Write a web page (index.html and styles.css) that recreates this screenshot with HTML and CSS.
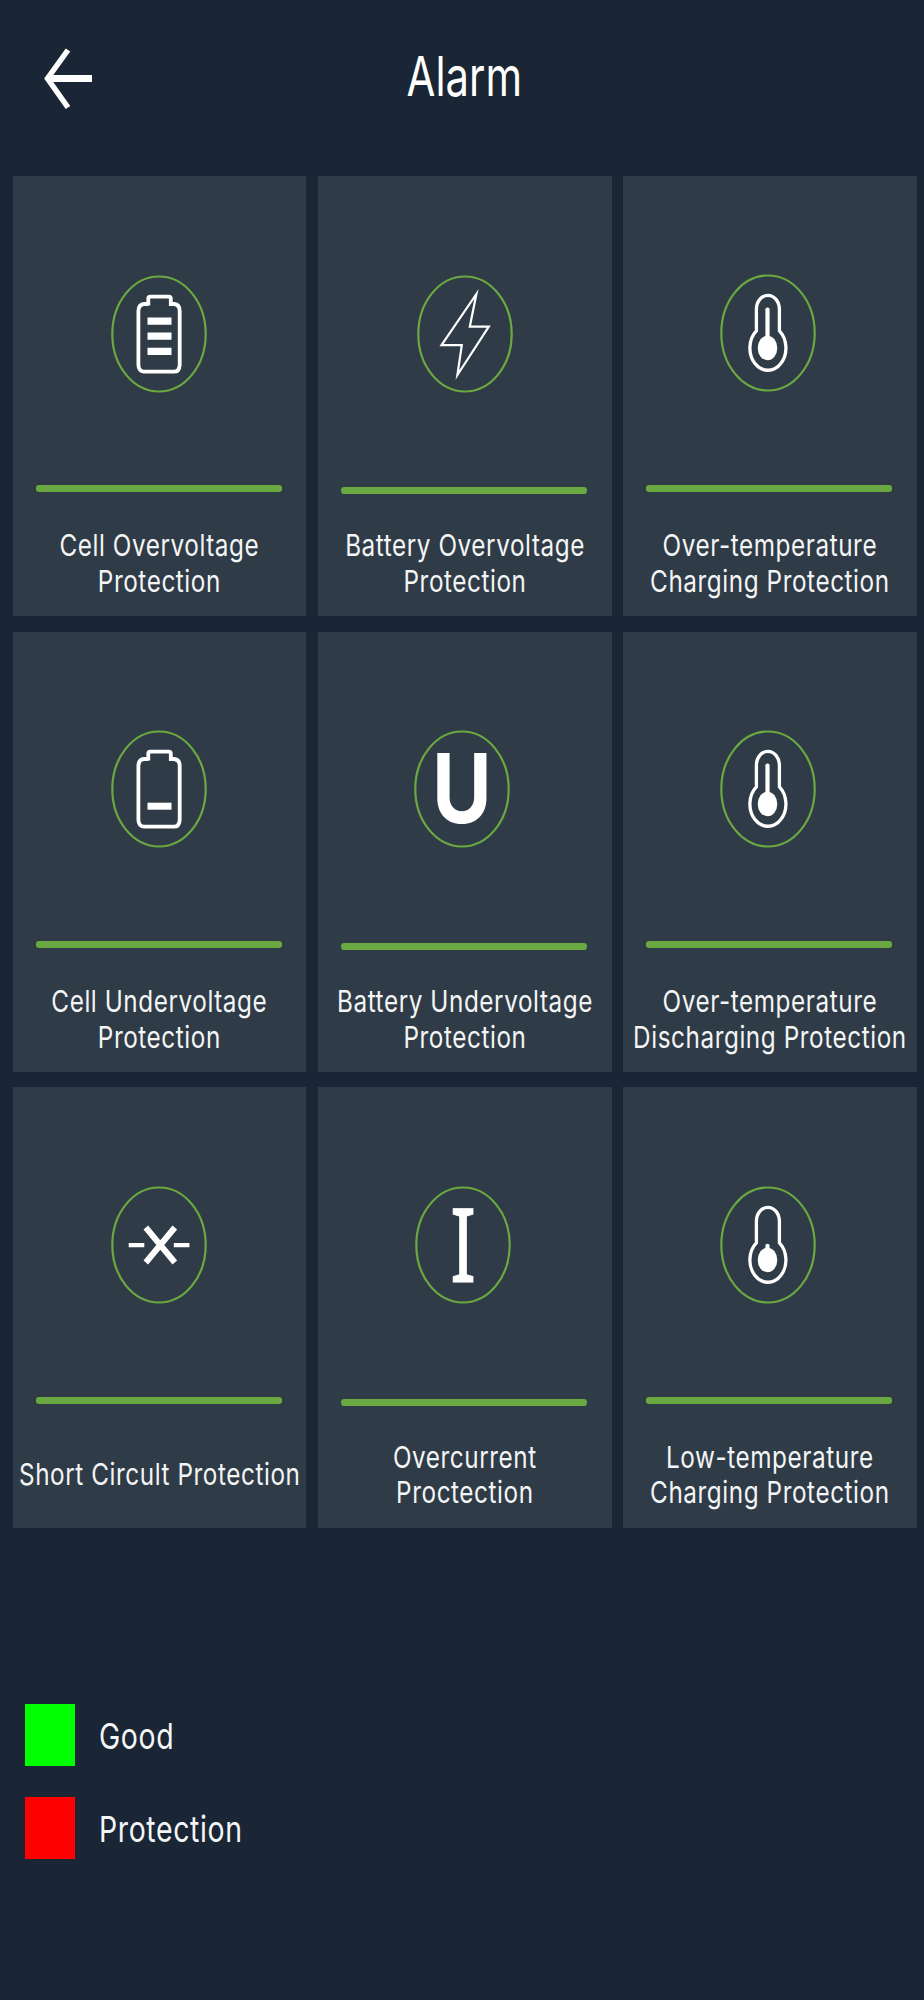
FILE: index.html
```html
<!DOCTYPE html>
<html lang="en">
<head>
    <meta charset="UTF-8">
    <meta name="viewport" content="width=device-width, initial-scale=1.0">
    <title>Alarm</title>
    <link rel="stylesheet" href="styles.css">
</head>
<body>
    <header class="topbar">
        <svg class="back" width="50" height="62" viewBox="0 0 50 62">
            <path class="head" d="M25 2L4.5 30.5L25 59.5"/>
            <path class="shaft" d="M4 30.5H49"/>
        </svg>
        <h1>Alarm</h1>
    </header>

    <main class="grid">
        <div class="card">
            <svg class="icon" viewBox="0 0 96 118">
                <ellipse class="ring" cx="48" cy="59" rx="46.7" ry="57.5"/>
                <path class="line" d="M37.3 30.6V23.5Q37.3 21.6 39.3 21.6H57.8Q59.8 21.6 59.8 23.5V29H63.2Q68.7 29.5 68.7 36V90Q68.2 96.7 63 96.7H33Q27.6 96.2 27.4 90V36Q27.6 29.3 33 29H37.3"/>
                <path class="fill" d="M36.5 42.5h24v7.2h-24zM36.5 57.5h24v7.2h-24zM36.5 72.7h24v7.2h-24z"/>
            </svg>
            <div class="bar"></div>
            <div class="label"><p>Cell Overvoltage<br>Protection</p></div>
        </div>
        <div class="card middle">
            <svg class="icon" viewBox="0 0 96 118">
                <ellipse class="ring" cx="48" cy="59" rx="46.7" ry="57.5"/>
                <path class="bolt" d="M59.4 19L24.5 70.2H44.8L40.4 100L71.8 51.7H52.8Z"/>
            </svg>
            <div class="bar"></div>
            <div class="label"><p>Battery Overvoltage<br>Protection</p></div>
        </div>
        <div class="card right first">
            <svg class="icon" viewBox="0 0 96 118">
                <ellipse class="ring" cx="48" cy="59" rx="46.7" ry="57.5"/>
                <path class="thermo" d="M36.4 56.8V35.3A11.5 14 0 0 1 59.4 35.3V56.8A18 22.3 0 1 1 36.4 56.8Z"/>
                <path class="stem" d="M47.5 35.5V68"/>
                <ellipse class="fill" cx="47.5" cy="74" rx="9.8" ry="12.2"/>
            </svg>
            <div class="bar"></div>
            <div class="label"><p>Over-temperature<br>Charging Protection</p></div>
        </div>

        <div class="card lower">
            <svg class="icon" viewBox="0 0 96 118">
                <ellipse class="ring" cx="48" cy="59" rx="46.7" ry="57.5"/>
                <path class="line" d="M37.3 30.6V23.5Q37.3 21.6 39.3 21.6H57.8Q59.8 21.6 59.8 23.5V29H63.2Q68.7 29.5 68.7 36V90Q68.2 96.7 63 96.7H33Q27.6 96.2 27.4 90V36Q27.6 29.3 33 29H37.3"/>
                <path class="fill" d="M36.5 72.7h24v7h-24z"/>
            </svg>
            <div class="bar"></div>
            <div class="label"><p>Cell Undervoltage<br>Protection</p></div>
        </div>
        <div class="card middle lower voltage">
            <svg class="icon" viewBox="0 0 96 118">
                <ellipse class="ring" cx="48" cy="59" rx="46.7" ry="57.5"/>
                <text class="letter-u" transform="translate(47.8 93.2) scale(.85 1)">U</text>
            </svg>
            <div class="bar"></div>
            <div class="label"><p>Battery Undervoltage<br>Protection</p></div>
        </div>
        <div class="card right lower">
            <svg class="icon" viewBox="0 0 96 118">
                <ellipse class="ring" cx="48" cy="59" rx="46.7" ry="57.5"/>
                <path class="thermo" d="M36.4 56.8V35.3A11.5 14 0 0 1 59.4 35.3V56.8A18 22.3 0 1 1 36.4 56.8Z"/>
                <path class="stem" d="M47.5 35.5V68"/>
                <ellipse class="fill" cx="47.5" cy="74" rx="9.8" ry="12.2"/>
            </svg>
            <div class="bar"></div>
            <div class="label"><p>Over-temperature<br>Discharging Protection</p></div>
        </div>

        <div class="card lower">
            <svg class="icon" viewBox="0 0 96 118">
                <ellipse class="ring" cx="48" cy="59" rx="46.7" ry="57.5"/>
                <path class="cross" d="M34.8 41.5L63.8 76.5M63.8 41.5L34.8 76.5"/>
                <path class="fill" d="M17.7 56.9h15.6v4.4h-15.6zM62.8 56.9h15.6v4.4h-15.6z"/>
            </svg>
            <div class="bar"></div>
            <div class="label"><p>Short Circult Protection</p></div>
        </div>
        <div class="card middle lower current">
            <svg class="icon" viewBox="0 0 96 118">
                <ellipse class="ring" cx="48" cy="59" rx="46.7" ry="57.5"/>
                <text class="letter-i" transform="translate(48 95.8) scale(.75 1)">I</text>
            </svg>
            <div class="bar"></div>
            <div class="label"><p>Overcurrent<br>Proctection</p></div>
        </div>
        <div class="card right lower">
            <svg class="icon" viewBox="0 0 96 118">
                <ellipse class="ring" cx="48" cy="59" rx="46.7" ry="57.5"/>
                <path class="thermo" d="M36.4 56.8V35.3A11.5 14 0 0 1 59.4 35.3V56.8A18 22.3 0 1 1 36.4 56.8Z"/>
                <path class="stem" d="M47.5 59.8V68"/>
                <ellipse class="fill" cx="47.5" cy="74" rx="9.8" ry="12.2"/>
            </svg>
            <div class="bar"></div>
            <div class="label"><p>Low-temperature<br>Charging Protection</p></div>
        </div>
    </main>

    <footer class="legend">
        <div class="legend-item">
            <span class="swatch good"></span>
            <span class="legend-text">Good</span>
        </div>
        <div class="legend-item">
            <span class="swatch protection"></span>
            <span class="legend-text">Protection</span>
        </div>
    </footer>
</body>
</html>
```
FILE: styles.css
```css
* {
    box-sizing: border-box;
}
body {
    margin: 0;
    min-height: 2000px;
    font-family: Inter, "Liberation Sans", sans-serif;
    background-color: #1a2535;
    color: #f4f5f6;
}
.topbar {
    display: grid;
    grid-template-columns: 94px 1fr 94px;
    align-items: center;
    height: 176px;
    padding-bottom: 25px;
}
.back {
    margin: 6px 0 0 43px;
    fill: none;
    stroke: white;
}
.head {
    stroke-width: 5.5;
}
.shaft {
    stroke-width: 7;
}
h1 {
    margin: 0;
    padding-left: 6px;
    font-size: 55px;
    font-weight: 400;
    line-height: 72px;
    text-align: center;
    color: white;
    transform: scaleX(0.76);
}
.grid {
    display: grid;
    grid-template-columns: repeat(3, 293.8px);
    grid-auto-rows: 440.4px;
    gap: 15.3px 11.6px;
    padding-left: 12.5px;
}
.card {
    display: flex;
    flex-direction: column;
    align-items: center;
    background-color: #2f3c47;
}
.icon {
    flex: none;
    width: 96px;
    height: 118px;
    margin-top: 99px;
    overflow: visible;
}
.lower .icon {
    margin-top: 98.5px;
    margin-bottom: 0.8px;
}
.middle .icon {
    margin-left: 1px;
}
.right .icon {
    margin-right: 4px;
}
.first .icon {
    margin-top: 97.5px;
    margin-bottom: 1.5px;
}
.voltage .icon {
    margin-left: 0;
    margin-right: 6px;
}
.current .icon {
    margin-left: 0;
    margin-right: 3px;
}
.ring {
    fill: none;
    stroke: #6aa842;
    stroke-width: 2.2;
}
.line {
    fill: none;
    stroke: white;
    stroke-width: 3.8;
}
.bolt {
    fill: none;
    stroke: white;
    stroke-width: 2.2;
    stroke-miterlimit: 10;
}
.thermo {
    fill: none;
    stroke: white;
    stroke-width: 3.3;
}
.stem {
    stroke: white;
    stroke-width: 4.2;
    stroke-linecap: round;
}
.cross {
    stroke: white;
    stroke-width: 6;
}
.fill {
    fill: white;
}
.letter-u {
    font-size: 96px;
    font-weight: 700;
    text-anchor: middle;
    fill: white;
}
.letter-i {
    font-family: "Noto Sans", sans-serif;
    font-size: 103px;
    font-weight: 400;
    text-anchor: middle;
    fill: white;
    stroke: white;
    stroke-width: 0.8;
}
.bar {
    flex: none;
    width: 246px;
    height: 7px;
    margin-top: 92px;
    border-radius: 3px;
    background-color: #6aa842;
}
.middle .bar {
    margin-top: 94px;
    margin-bottom: -2px;
    margin-right: 1px;
}
.right .bar {
    margin-right: 2px;
}
.label {
    flex: 1;
    display: flex;
    align-items: center;
    justify-content: center;
    width: 100%;
    padding-top: 19px;
}
.label p {
    flex: none;
    margin: 0;
    font-size: 30px;
    line-height: 35.6px;
    letter-spacing: 0.7px;
    text-align: center;
    white-space: nowrap;
    transform: scaleX(0.81);
}
.legend {
    display: flex;
    flex-direction: column;
    gap: 31px;
    padding: 176px 0 0 24.6px;
}
.legend-item {
    display: flex;
    align-items: center;
    gap: 24.5px;
}
.swatch {
    width: 50px;
    height: 62px;
}
.good {
    background-color: #00ff00;
}
.protection {
    background-color: #ff0000;
}
.legend-text {
    padding-top: 2px;
    font-size: 36px;
    line-height: 44px;
    letter-spacing: 0.8px;
    transform: scaleX(0.79);
    transform-origin: left;
}
```
